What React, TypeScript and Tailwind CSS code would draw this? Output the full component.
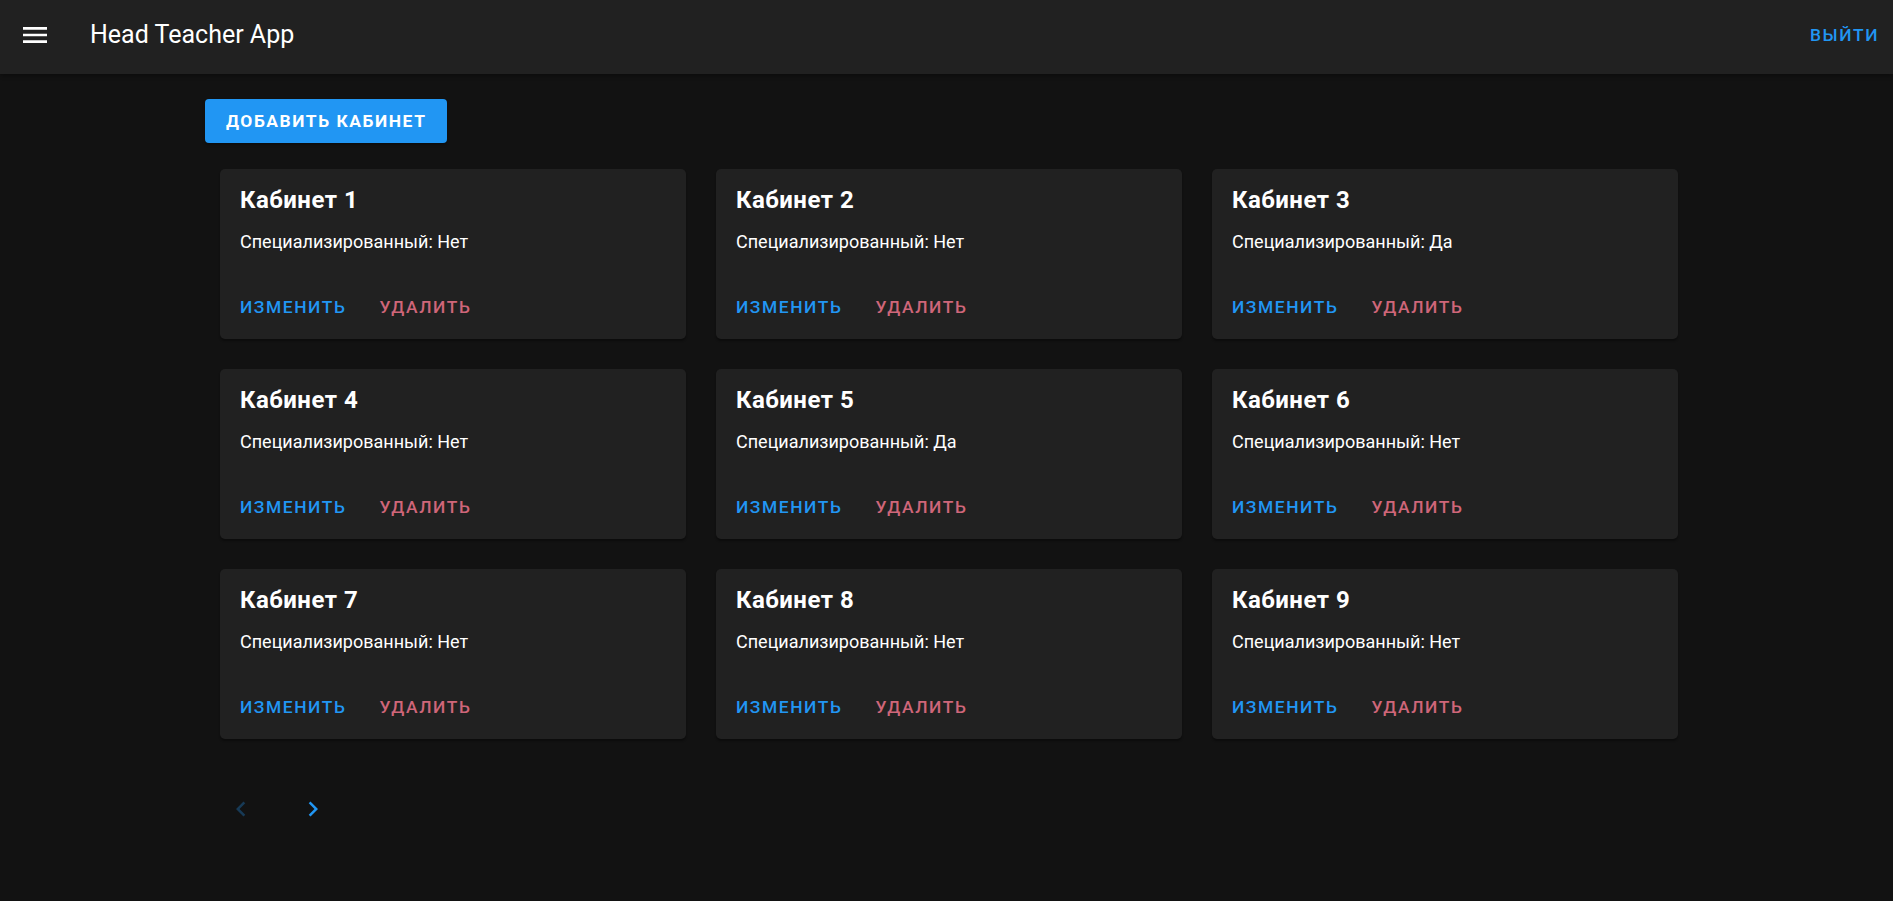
import React from 'react';

const ROOMS = [
  { id: 1, special: false },
  { id: 2, special: false },
  { id: 3, special: true },
  { id: 4, special: false },
  { id: 5, special: true },
  { id: 6, special: false },
  { id: 7, special: false },
  { id: 8, special: false },
  { id: 9, special: false },
];

function MenuIcon() {
  return (
    <svg width="32" height="32" viewBox="0 0 24 24" fill="currentColor">
      <path d="M3,6H21V8H3V6M3,11H21V13H3V11M3,16H21V18H3V16Z" />
    </svg>
  );
}

function Chevron({ dir }: { dir: 'left' | 'right' }) {
  return (
    <svg width="30" height="30" viewBox="0 0 24 24" fill="currentColor">
      {dir === 'left' ? (
        <path d="M15.41,16.58L10.83,12L15.41,7.41L14,6L8,12L14,18L15.41,16.58Z" />
      ) : (
        <path d="M8.59,16.58L13.17,12L8.59,7.41L10,6L16,12L10,18L8.59,16.58Z" />
      )}
    </svg>
  );
}

export default function App() {
  return (
    <div className="min-h-[901px] bg-[#121212] text-white font-['Roboto',sans-serif]">
      {/* App bar */}
      <header className="h-[74px] pb-[4px] bg-[#212121] flex items-center shadow-[0_2px_4px_rgba(0,0,0,0.3)]">
        <button className="ml-[19px] text-white">
          <MenuIcon />
        </button>
        <div className="ml-[39px] text-[25px] leading-[32px] font-normal">Head Teacher App</div>
        <button className="ml-auto mr-[14px] text-[#2196f3] text-[17.4px] font-medium uppercase tracking-[0.09em]">
          Выйти
        </button>
      </header>

      <main className="pl-[205px] pt-[25px]">
        <button className="h-[44px] px-[21px] rounded-[4px] bg-[#2196f3] text-white text-[17.4px] font-bold uppercase tracking-[0.09em] shadow-[0_2px_3px_rgba(0,0,0,0.3)]">
          Добавить кабинет
        </button>

        <div className="ml-[15px] mt-[26px] grid grid-cols-[repeat(3,466px)] gap-[30px]">
          {ROOMS.map((r) => (
            <div
              key={r.id}
              className="h-[170px] bg-[#212121] rounded-[5px] shadow-[0_2px_2px_rgba(0,0,0,0.35)] pt-[15px] px-[20px]"
            >
              <div className="text-[24px] leading-[32px] font-bold tracking-[0.02em]">Кабинет {r.id}</div>
              <div className="mt-[14px] text-[18px] leading-[24px]">
                Специализированный: {r.special ? 'Да' : 'Нет'}
              </div>
              <div className="mt-[41px] flex gap-[33px] text-[17.4px] leading-[24px] font-medium">
                <button className="text-[#2196f3] uppercase tracking-[0.09em]">Изменить</button>
                <button className="text-[#cf6679] uppercase tracking-[0.09em]">Удалить</button>
              </div>
            </div>
          ))}
        </div>

        {/* Pagination */}
        <div className="ml-[21px] mt-[55px] flex gap-[42px]">
          <button className="text-[#173a56]">
            <Chevron dir="left" />
          </button>
          <button className="text-[#2196f3]">
            <Chevron dir="right" />
          </button>
        </div>
      </main>
    </div>
  );
}
